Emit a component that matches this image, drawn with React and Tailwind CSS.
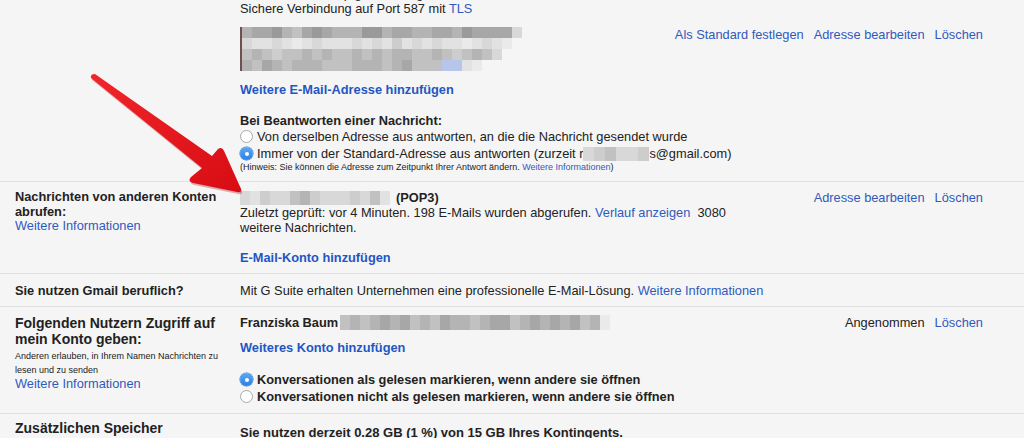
import React from "react";

const SHADES = {
  a: "bg-[#9a9a9a]",
  b: "bg-[#a7a7a7]",
  c: "bg-[#b4b4b4]",
  d: "bg-[#c1c1c1]",
  e: "bg-[#cdcdcd]",
  f: "bg-[#d8d8d8]",
  g: "bg-[#e2e2e2]",
  h: "bg-[#eaeaea]",
  u: "bg-[#b8c5ea]",
  r: "bg-[#6e5050]",
};

// pixelated (blurred) blocks, one string per row, one char per cell
function Pixels({ rows, cell = 10, h = 11 }) {
  return (
    <div className="flex flex-col">
      {rows.map((row, i) => (
        <div key={i} className="flex" style={{ height: h }}>
          {row.split("").map((c, j) => (
            <div
              key={j}
              className={SHADES[c]}
              style={{ width: c === "r" ? 2 : cell, height: h }}
            />
          ))}
        </div>
      ))}
    </div>
  );
}

function Radio({ checked }) {
  if (checked) {
    return (
      <span className="flex h-[13px] w-[13px] shrink-0 items-center justify-center rounded-full bg-gradient-to-b from-[#5aa8f5] to-[#2b7fe6] shadow-[0_0_0_0.5px_#2d73c9]">
        <span className="h-[4px] w-[4px] rounded-full bg-white" />
      </span>
    );
  }
  return (
    <span className="h-[13px] w-[13px] shrink-0 rounded-full border border-[#a9a9a9] bg-white" />
  );
}

function Actions({ children }) {
  return <div className="flex shrink-0 gap-[10px] whitespace-nowrap">{children}</div>;
}

const link = "text-[#3159bd]";
const boldLink = "font-bold text-[#2356c4]";

export default function App() {
  return (
    <div className="relative h-screen overflow-hidden bg-[#f5f5f5] font-['Liberation_Sans',Arial,sans-serif] text-[12.8px] leading-[15px] text-[#222]">
      <div className="-mt-[14px]">
        {/* send-as row (continued from above) */}
        <div className="flex border-b border-[#e1e1e1] pb-[8px]">
          <div className="w-[240px] shrink-0 pl-[15px]" />
          <div className="flex-1 pr-[41px]">
            <div>Mail wird über smtp.gmail.com gesendet</div>
            <div>
              Sichere Verbindung auf Port 587 mit <span className={link}>TLS</span>
            </div>
            <div className="mt-[11px] flex justify-between">
              <Pixels
                h={11}
                rows={[
                  "rcbbacdbabcccaacbbccbbcabbbbf",
                  "rfggfghgfgggfgfgegfgfgghgfgh",
                  "rdcdeddcdcddcdcdccddcdedcdf",
                  "rcdbcdcccdddcccdcbddduugh",
                ]}
              />
              <Actions>
                <span className={link}>Als Standard festlegen</span>
                <span className={link}>Adresse bearbeiten</span>
                <span className={link}>Löschen</span>
              </Actions>
            </div>
            <div className={`mt-[11px] ${boldLink}`}>Weitere E-Mail-Adresse hinzufügen</div>
            <div className="mt-[16px] font-bold">Bei Beantworten einer Nachricht:</div>
            <div className="flex h-[17px] items-center gap-[4px]">
              <Radio />
              <span>Von derselben Adresse aus antworten, an die die Nachricht gesendet wurde</span>
            </div>
            <div className="flex h-[17px] items-center gap-[4px]">
              <Radio checked />
              <span className="flex items-center">
                Immer von der Standard-Adresse aus antworten (zurzeit r
                <span className="inline-block">
                  <Pixels h={14} cell={11} rows={["fedffe"]} />
                </span>
                s@gmail.com)
              </span>
            </div>
            <div className="text-[9px] leading-[11px]">
              (Hinweis: Sie können die Adresse zum Zeitpunkt Ihrer Antwort ändern.{" "}
              <span className={link}>Weitere Informationen</span>)
            </div>
          </div>
        </div>

        {/* POP3 row */}
        <div className="flex border-b border-[#e1e1e1] pt-[8px] pb-[8px]">
          <div className="w-[240px] shrink-0 pl-[15px] leading-[14.5px]">
            <div className="font-bold">
              Nachrichten von anderen Konten
              <br />
              abrufen:
            </div>
            <div className={link}>Weitere Informationen</div>
          </div>
          <div className="flex flex-1 justify-between pr-[41px]">
            <div>
              <div className="flex items-center gap-[6px]">
                <Pixels h={14} rows={["fgeffdcefffefdg"]} />
                <span className="font-bold">(POP3)</span>
              </div>
              <div>
                Zuletzt geprüft: vor 4 Minuten. 198 E-Mails wurden abgerufen.{" "}
                <span className={link}>Verlauf anzeigen</span>&nbsp; 3080
                <br />
                weitere Nachrichten.
              </div>
              <div className={`mt-[15px] ${boldLink}`}>E-Mail-Konto hinzufügen</div>
            </div>
            <Actions>
              <span className={link}>Adresse bearbeiten</span>
              <span className={link}>Löschen</span>
            </Actions>
          </div>
        </div>

        {/* G Suite row */}
        <div className="flex border-b border-[#e1e1e1] pt-[9px] pb-[8px]">
          <div className="w-[240px] shrink-0 pl-[15px] font-bold">Sie nutzen Gmail beruflich?</div>
          <div className="flex-1 pr-[41px]">
            Mit G Suite erhalten Unternehmen eine professionelle E-Mail-Lösung.{" "}
            <span className={link}>Weitere Informationen</span>
          </div>
        </div>

        {/* delegation row */}
        <div className="flex border-b border-[#e1e1e1] pt-[8px] pb-[8px]">
          <div className="w-[240px] shrink-0 pl-[15px]">
            <div className="text-[14px] font-bold leading-[16px]">
              Folgenden Nutzern Zugriff auf
              <br />
              mein Konto geben:
            </div>
            <div className="mt-[2px] text-[9px] leading-[14px]">
              Anderen erlauben, in Ihrem Namen Nachrichten zu
              <br />
              lesen und zu senden
            </div>
            <div className={`leading-[13px] ${link}`}>Weitere Informationen</div>
          </div>
          <div className="flex-1 pr-[41px]">
            <div className="flex justify-between">
              <div className="flex items-center gap-[2px]">
                <span className="font-bold">Franziska Baum</span>
                <Pixels h={15} rows={["dcdcbcbdcdbccdcbbdcbcbcbdch"]} />
              </div>
              <Actions>
                <span>Angenommen</span>
                <span className={link}>Löschen</span>
              </Actions>
            </div>
            <div className={`mt-[10px] ${boldLink}`}>Weiteres Konto hinzufügen</div>
            <div className="mt-[16px] flex h-[17px] items-center gap-[4px] font-bold">
              <Radio checked />
              <span>Konversationen als gelesen markieren, wenn andere sie öffnen</span>
            </div>
            <div className="flex h-[17px] items-center gap-[4px] font-bold">
              <Radio />
              <span>Konversationen nicht als gelesen markieren, wenn andere sie öffnen</span>
            </div>
          </div>
        </div>

        {/* storage row */}
        <div className="flex pt-[6px]">
          <div className="w-[240px] shrink-0 pl-[15px]">
            <div className="text-[14px] font-bold leading-[16px]">Zusätzlichen Speicher</div>
            <div className="text-[9px] leading-[12px]">Jetzt erwerben</div>
          </div>
          <div className="flex-1 pr-[41px]">
            <div className="mt-[5px] text-[13px] font-bold">
              Sie nutzen derzeit 0.28 GB (1 %) von 15 GB Ihres Kontingents.
            </div>
          </div>
        </div>
      </div>

      {/* red annotation arrow */}
      <svg
        className="pointer-events-none absolute left-0 top-0"
        width="1024"
        height="438"
        viewBox="0 0 1024 438"
      >
        <defs>
          <linearGradient id="arrowRed" x1="0" y1="0" x2="1" y2="1">
            <stop offset="0" stopColor="#f0262b" />
            <stop offset="1" stopColor="#d80d13" />
          </linearGradient>
        </defs>
        <path
          d="M91 78 Q90 74 95 74 L212 156 L218 149 Q222 146 224 151 L241 189 Q242 193 237 192 L193 183 Q187 181 191 177 L202 168 Z"
          fill="#a0070b"
          opacity="0.3"
          transform="translate(1 2)"
        />
        <path
          d="M91 78 Q90 74 95 74 L212 156 L218 149 Q222 146 224 151 L241 189 Q242 193 237 192 L193 183 Q187 181 191 177 L202 168 Z"
          fill="url(#arrowRed)"
        />
      </svg>
    </div>
  );
}
